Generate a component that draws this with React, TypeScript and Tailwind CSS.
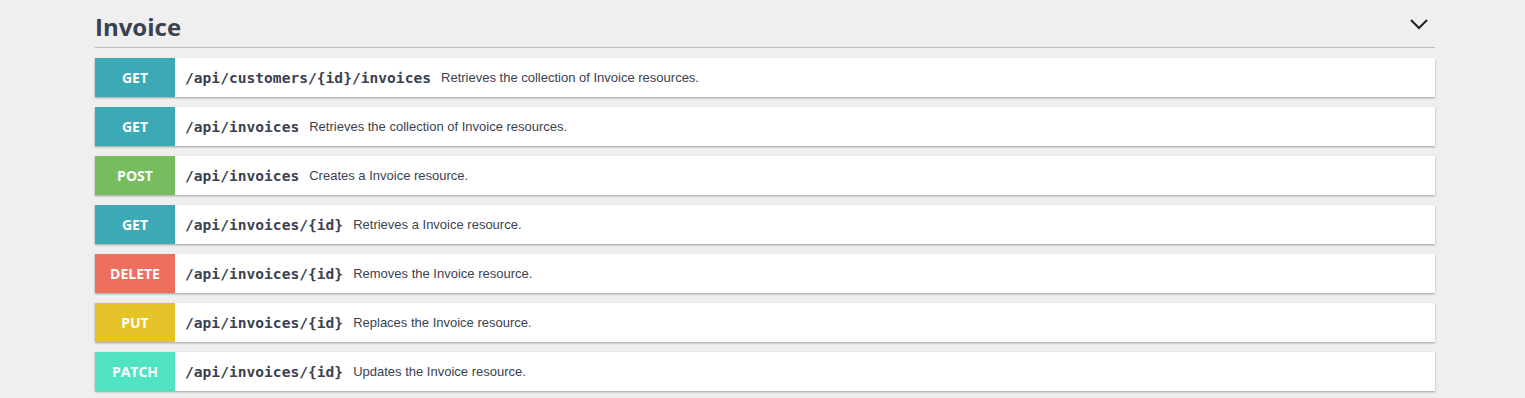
import React from "react";

const rows = [
  { m: "GET", bg: "bg-[#3caab5]", path: "/api/customers/{id}/invoices", d: "Retrieves the collection of Invoice resources." },
  { m: "GET", bg: "bg-[#3caab5]", path: "/api/invoices", d: "Retrieves the collection of Invoice resources." },
  { m: "POST", bg: "bg-[#78bc61]", path: "/api/invoices", d: "Creates a Invoice resource." },
  { m: "GET", bg: "bg-[#3caab5]", path: "/api/invoices/{id}", d: "Retrieves a Invoice resource." },
  { m: "DELETE", bg: "bg-[#ed6f5e]", path: "/api/invoices/{id}", d: "Removes the Invoice resource." },
  { m: "PUT", bg: "bg-[#e6c229]", path: "/api/invoices/{id}", d: "Replaces the Invoice resource." },
  { m: "PATCH", bg: "bg-[#50e3c2]", path: "/api/invoices/{id}", d: "Updates the Invoice resource." },
];

export default function App() {
  return (
    <div className="min-h-[398px] bg-[#efefef] pt-[1px]">
      <div className="ml-[95px] w-[1340px]">
        <div className="flex h-[47px] items-center justify-between border-b border-[#bdbdbd] pt-[6px]">
          <h2 className="text-[24px] font-bold text-[#3b4151] [font-family:'Open_Sans',sans-serif]">Invoice</h2>
          <svg width="20" height="20" viewBox="0 0 20 20" className="mr-[6px] mb-[6px]">
            <path d="M2 6 L10 14 L18 6" fill="none" stroke="#222" strokeWidth="2" />
          </svg>
        </div>
        <div className="mt-[10px] flex flex-col gap-[10px]">
          {rows.map((r, i) => (
            <div key={i} className="flex h-[39px] items-center bg-white shadow-[0_1px_2px_rgba(0,0,0,0.35)]">
              <div className={`flex h-full w-[80px] items-center justify-center text-[14px] font-bold text-white [font-family:'Open_Sans',sans-serif] ${r.bg}`}>
                {r.m}
              </div>
              <span className="ml-[10px] text-[14.6px] font-bold text-[#3b4151] [font-family:'DejaVu_Sans_Mono',monospace]">{r.path}</span>
              <span className="ml-[10px] text-[13px] text-[#3b4151] [font-family:'Liberation_Sans',Arial,sans-serif]">{r.d}</span>
            </div>
          ))}
        </div>
      </div>
    </div>
  );
}
